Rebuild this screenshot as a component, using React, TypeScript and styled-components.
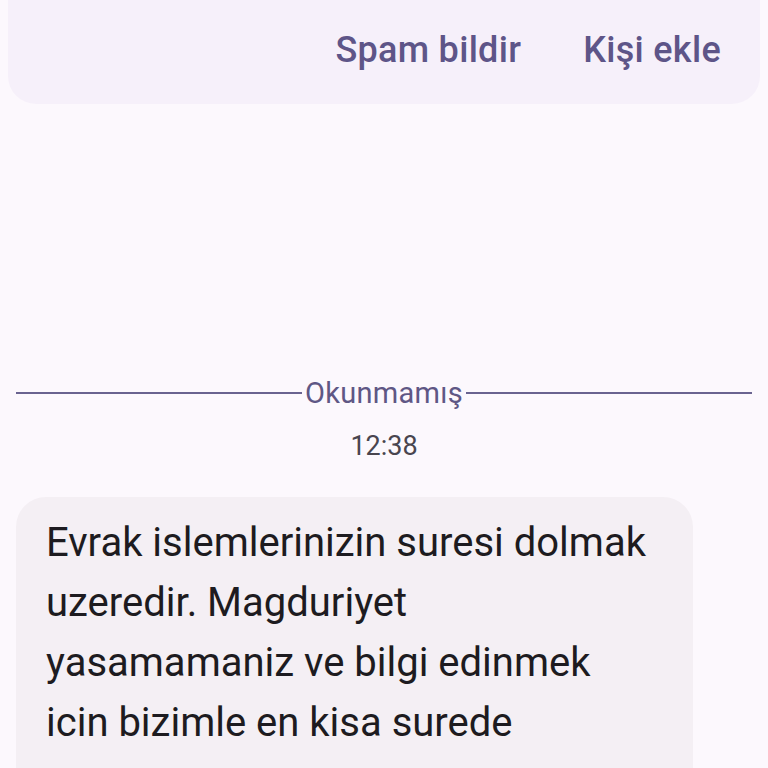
import React from 'react';
import styled, { createGlobalStyle } from 'styled-components';

const GlobalStyle = createGlobalStyle`
  html, body {
    margin: 0;
    padding: 0;
    background: #fcf8fd;
    font-family: Roboto, "Noto Sans", sans-serif;
    overflow: hidden;
  }
`;

const Page = styled.div`
  width: 768px;
  height: 768px;
  display: flex;
  flex-direction: column;
  background: #fcf8fd;
  overflow: hidden;

  & > * {
    flex-shrink: 0;
  }
`;

const ActionCard = styled.div`
  margin: 0 8px;
  height: 104px;
  box-sizing: border-box;
  background: #f6f0fa;
  border-radius: 0 0 28px 28px;
  display: flex;
  justify-content: flex-end;
  align-items: flex-start;
  gap: 62px;
  padding: 28px 39px 0 0;
`;

const ActionButton = styled.button`
  border: none;
  background: none;
  padding: 0;
  font-family: Roboto, "Noto Sans", sans-serif;
  font-weight: 500;
  font-size: 36px;
  line-height: 44px;
  letter-spacing: 0.3px;
  color: #5e5588;
  cursor: pointer;
`;

const Divider = styled.div`
  margin: 271px 16px 0;
  display: flex;
  align-items: center;
  gap: 2px;
`;

const Line = styled.div`
  flex: 1;
  height: 2px;
  background: #6a6390;
`;

const DividerLabel = styled.span`
  font-size: 29px;
  line-height: 36px;
  letter-spacing: 0.3px;
  color: #5f5785;
  padding: 0 1px;
`;

const Timestamp = styled.div`
  margin-top: 17px;
  text-align: center;
  font-size: 27px;
  line-height: 36px;
  color: #49454f;
`;

const Bubble = styled.div`
  margin: 33px 0 0 16px;
  width: 677px;
  box-sizing: border-box;
  background: #f4eff4;
  border-radius: 30px 30px 0 0;
  padding: 16px 30px 40px;
  font-size: 40px;
  line-height: 60px;
  color: #1d1b20;
`;

export default function App() {
  return (
    <Page>
      <GlobalStyle />
      <ActionCard>
        <ActionButton>Spam bildir</ActionButton>
        <ActionButton>Kişi ekle</ActionButton>
      </ActionCard>
      <Divider>
        <Line />
        <DividerLabel>Okunmamış</DividerLabel>
        <Line />
      </Divider>
      <Timestamp>12:38</Timestamp>
      <Bubble>
        Evrak islemlerinizin suresi dolmak
        <br />
        uzeredir. Magduriyet
        <br />
        yasamamaniz ve bilgi edinmek
        <br />
        icin bizimle en kisa surede
      </Bubble>
    </Page>
  );
}
